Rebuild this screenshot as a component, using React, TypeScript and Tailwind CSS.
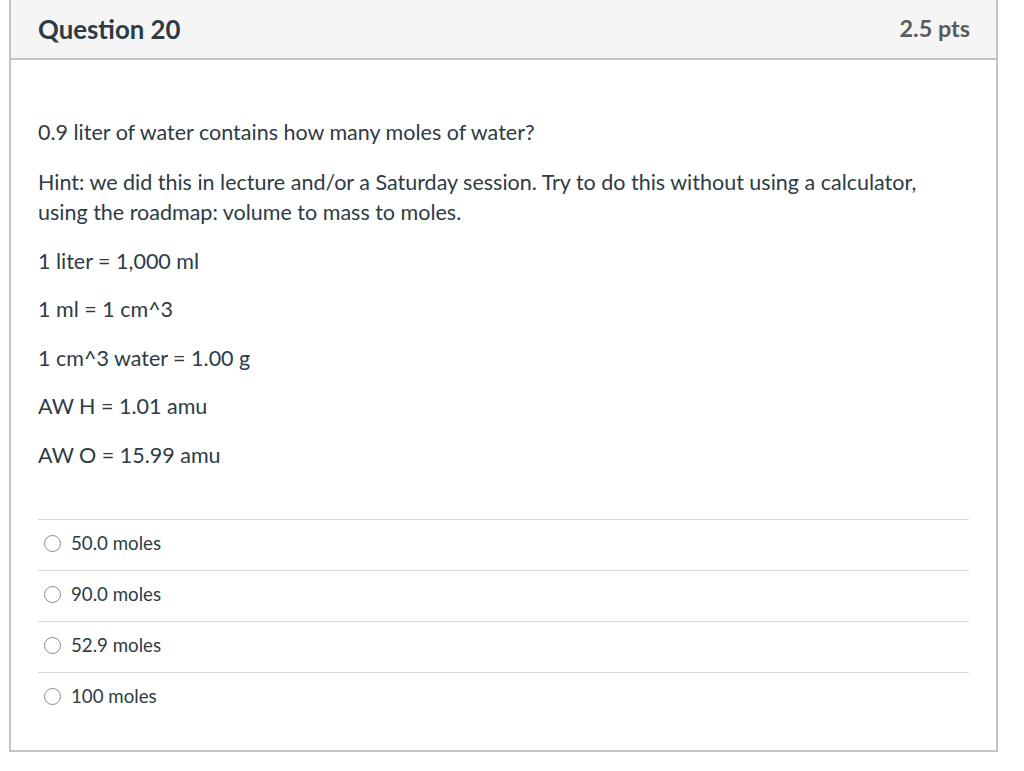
const paragraphs = [
  '0.9 liter of water contains how many moles of water?',
  'Hint: we did this in lecture and/or a Saturday session. Try to do this without using a calculator, using the roadmap: volume to mass to moles.',
  '1 liter = 1,000 ml',
  '1 ml = 1 cm^3',
  '1 cm^3 water = 1.00 g',
  'AW H = 1.01 amu',
  'AW O = 15.99 amu',
];

const answers = ['50.0 moles', '90.0 moles', '52.9 moles', '100 moles'];

export default function App() {
  return (
    <div className="min-h-[771px] bg-white pl-[9px] font-['Lato','Liberation_Sans',sans-serif] text-[#2d3b45]">
      <div className="w-[989px] border-x-2 border-b-2 border-[#c4c4c4]">
        <div className="flex h-[60px] items-center justify-between border-b-2 border-[#c4c4c4] bg-[#f5f5f5] pl-[27px] pr-[26px]">
          <h2 className="text-[25.8px] font-bold">Question 20</h2>
          <div className="text-[23.4px] font-bold text-[#5b5b5b]">2.5 pts</div>
        </div>

        <div className="px-[27px] pb-[27px] pt-[57px]">
          <div className="pr-[30px]">
            {paragraphs.map((p, i) => (
              <p
                key={p}
                className={`mb-[18.5px] text-[21.5px] leading-[30px] ${i === 1 ? 'mt-[20px]' : ''}`}
              >
                {p}
              </p>
            ))}
          </div>

          <div className="mt-[49px]">
            {answers.map((a) => (
              <label
                key={a}
                className="flex h-[51px] items-center gap-[10px] border-t border-[#d9d9d9] pb-[2px] pl-[6px] text-[18.7px]"
              >
                <span className="h-[17px] w-[17px] rounded-full border border-[#8a8a8a] bg-white" />
                <span>{a}</span>
              </label>
            ))}
          </div>
        </div>
      </div>
    </div>
  );
}
